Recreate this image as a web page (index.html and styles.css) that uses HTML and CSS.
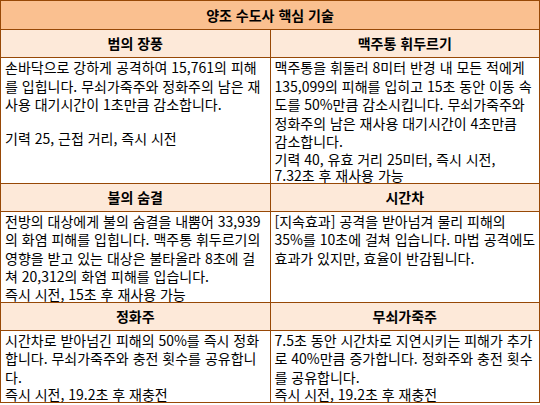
FILE: index.html
```html
<!DOCTYPE html>
<html lang="ko">
<head>
<meta charset="utf-8">
<title>양조 수도사 핵심 기술</title>
<link rel="stylesheet" href="styles.css">
</head>
<body>
<table class="skills">
  <tr><th colspan="2" class="title">양조 수도사 핵심 기술</th></tr>
  <tr><th class="head">범의 장풍</th><th class="head">맥주통 휘두르기</th></tr>
  <tr>
    <td><div class="desc">손바닥으로 강하게 공격하여 15,761의 피해<br>를 입힙니다. 무쇠가죽주와 정화주의 남은 재<br>사용 대기시간이 1초만큼 감소합니다.</div><div class="info"><br>기력 25, 근접 거리, 즉시 시전</div></td>
    <td><div class="desc">맥주통을 휘둘러 8미터 반경 내 모든 적에게<br>135,099의 피해를 입히고 15초 동안 이동 속<br>도를 50%만큼 감소시킵니다. 무쇠가죽주와<br>정화주의 남은 재사용 대기시간이 4초만큼<br>감소합니다.</div><div class="info">기력 40, 유효 거리 25미터, 즉시 시전,<br>7.32초 후 재사용 가능</div></td>
  </tr>
  <tr><th class="head">불의 숨결</th><th class="head">시간차</th></tr>
  <tr>
    <td><div class="desc">전방의 대상에게 불의 숨결을 내뿜어 33,939<br>의 화염 피해를 입힙니다. 맥주통 휘두르기의<br>영향을 받고 있는 대상은 불타올라 8초에 걸<br>쳐 20,312의 화염 피해를 입습니다.</div><div class="info">즉시 시전, 15초 후 재사용 가능</div></td>
    <td><div class="desc">[지속효과] 공격을 받아넘겨 물리 피해의<br>35%를 10초에 걸쳐 입습니다. 마법 공격에도<br>효과가 있지만, 효율이 반감됩니다.</div></td>
  </tr>
  <tr><th class="head">정화주</th><th class="head">무쇠가죽주</th></tr>
  <tr>
    <td><div class="desc">시간차로 받아넘긴 피해의 50%를 즉시 정화<br>합니다. 무쇠가죽주와 충전 횟수를 공유합니<br>다.</div><div class="info">즉시 시전, 19.2초 후 재충전</div></td>
    <td><div class="desc">7.5초 동안 시간차로 지연시키는 피해가 추가<br>로 40%만큼 증가합니다. 정화주와 충전 횟수<br>를 공유합니다.</div><div class="info">즉시 시전, 19.2초 후 재충전</div></td>
  </tr>
</table>
</body>
</html>
```

FILE: styles.css
```css
html, body {
  margin: 0;
  padding: 0;
  background: #ffffff;
}
body {
  font-family: "Noto Sans CJK KR", "Noto Sans", sans-serif;
  font-size: 14px;
  color: #000000;
}
.skills {
  width: 540px;
  border-collapse: collapse;
  table-layout: fixed;
}
.skills th,
.skills td {
  border: 1px solid #974806;
  padding: 0 4px;
  vertical-align: top;
  text-align: left;
  white-space: nowrap;
}
.skills th {
  text-align: center;
  font-weight: bold;
  line-height: 19px;
}
.skills .title {
  background: #fac090;
  padding-top: 5px;
  padding-bottom: 4px;
}
.skills .head {
  background: #fde9d9;
  padding-top: 4px;
  padding-bottom: 4px;
}
.desc {
  line-height: 18.5px;
}
.info {
  line-height: 16px;
}
```
